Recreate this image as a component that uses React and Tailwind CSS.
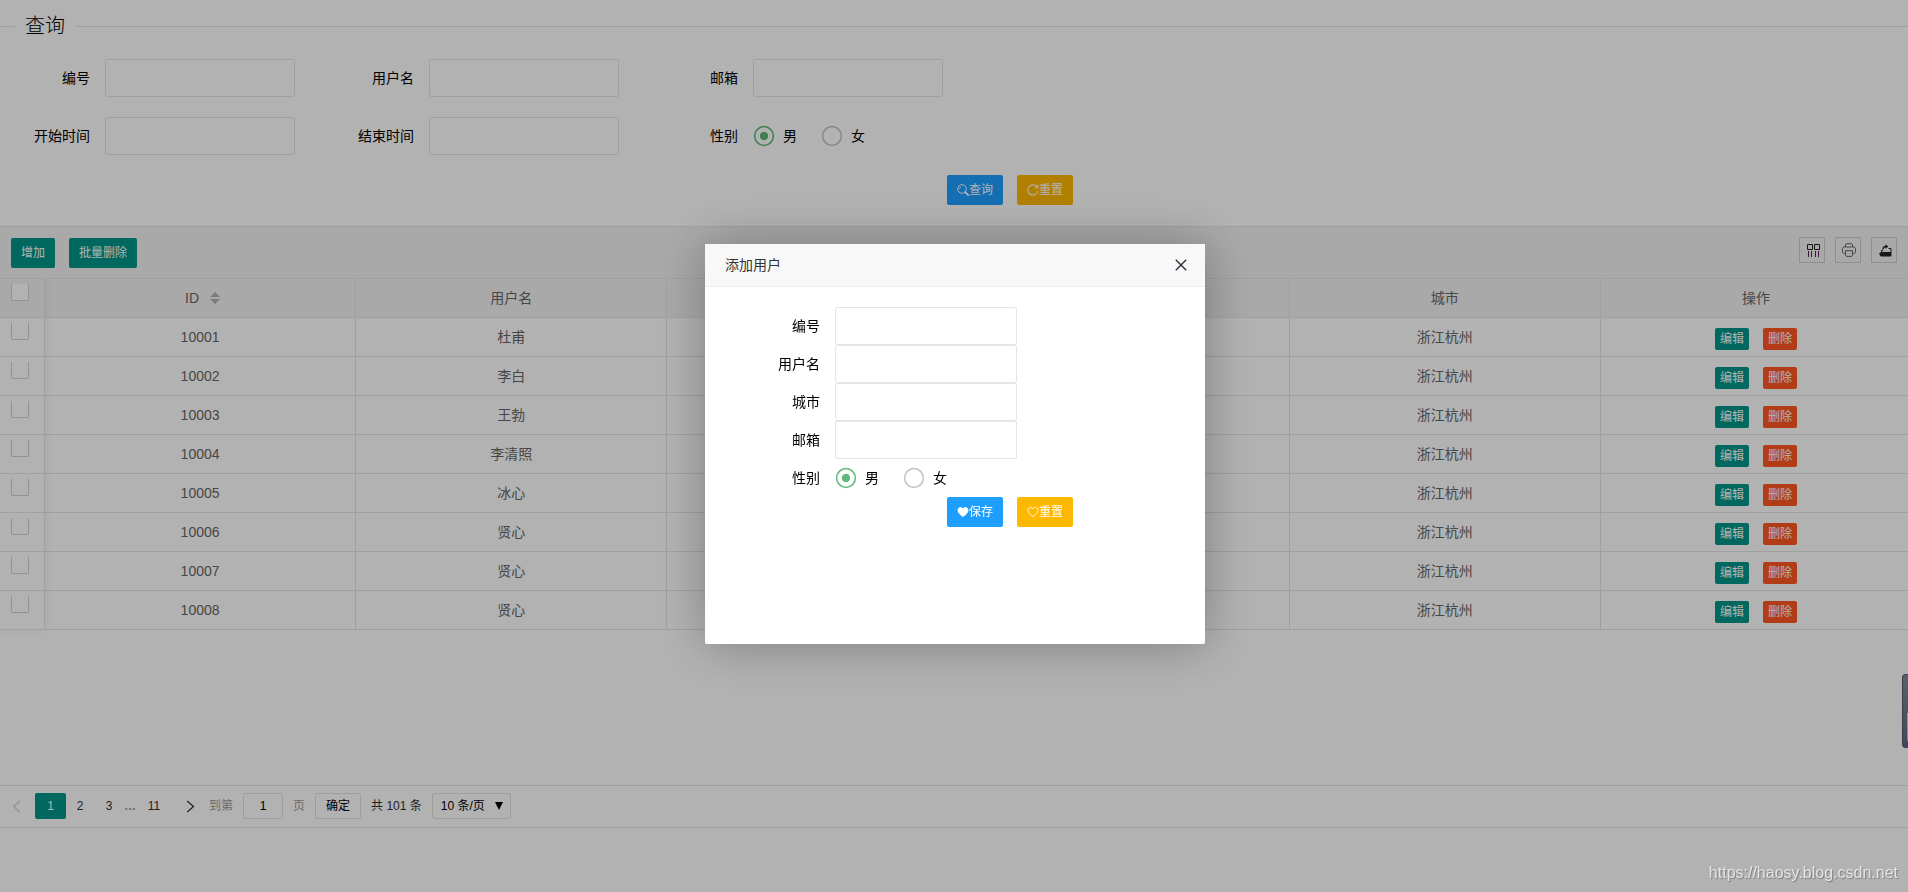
import { useState } from "react";

const USERS = [
  { id: 10001, username: "杜甫", city: "浙江杭州" },
  { id: 10002, username: "李白", city: "浙江杭州" },
  { id: 10003, username: "王勃", city: "浙江杭州" },
  { id: 10004, username: "李清照", city: "浙江杭州" },
  { id: 10005, username: "冰心", city: "浙江杭州" },
  { id: 10006, username: "贤心", city: "浙江杭州" },
  { id: 10007, username: "贤心", city: "浙江杭州" },
  { id: 10008, username: "贤心", city: "浙江杭州" },
];

const BTN = {
  primary: "bg-[#009688]",
  normal: "bg-[#1e9fff]",
  warm: "bg-[#ffb800]",
  danger: "bg-[#ff5722]",
};

function Button({ tone = "primary", size = "sm", icon, type = "button", children }) {
  const box = size === "xs" ? "h-[22px] px-[5px]" : "h-[30px] px-[10px]";
  return (
    <button
      type={type}
      className={`inline-flex items-center justify-center rounded-xs text-xs whitespace-nowrap text-white ${box} ${BTN[tone]}`}
    >
      {icon}
      {children}
    </button>
  );
}

function SearchIcon() {
  return (
    <svg width="12" height="12" viewBox="0 0 12 12" fill="none" stroke="currentColor" aria-hidden="true">
      <circle cx="5" cy="5" r="4.3" strokeWidth="1" />
      <path d="M2.6 5.2A2.6 2.6 0 0 1 4 2.9" strokeWidth="0.7" />
      <path d="M8.2 8.2l3 3" strokeWidth="1.8" strokeLinecap="round" />
    </svg>
  );
}

function RefreshIcon() {
  return (
    <svg width="12" height="12" viewBox="0 0 12 12" fill="none" stroke="currentColor" aria-hidden="true">
      <path d="M10.9 7A5.1 5.1 0 1 1 9.9 2.7" strokeWidth="1.1" />
      <path d="M10.8 0.8v3H7.8" strokeWidth="1.1" />
    </svg>
  );
}

function HeartIcon({ filled }) {
  return (
    <svg
      width="12"
      height="12"
      viewBox="0 0 12 12"
      fill={filled ? "currentColor" : "none"}
      stroke="currentColor"
      strokeWidth="0.9"
      aria-hidden="true"
    >
      <path d="M6 10.6C3.6 9 1 6.8 1 4.2 1 2.6 2.1 1.5 3.5 1.5c1.1 0 2 .6 2.5 1.5.5-.9 1.4-1.5 2.5-1.5C9.9 1.5 11 2.6 11 4.2c0 2.6-2.6 4.8-5 6.4z" />
    </svg>
  );
}

function ColumnsIcon() {
  return (
    <svg width="14" height="14" viewBox="0 0 14 14" fill="none" stroke="#222" aria-hidden="true">
      <path d="M1.5 1.5h5v5h-5zM8.5 1.5h5v5h-5z" />
      <path d="M2.5 8v6M5.5 8v6M9.5 8v6M12.5 8v6" stroke="#5c1f60" />
    </svg>
  );
}

function PrintIcon() {
  return (
    <svg width="14" height="14" viewBox="0 0 14 14" fill="none" stroke="#666" aria-hidden="true">
      <path d="M3.5 4V1.8c0-.7.4-1.1 1-1.1h5c.6 0 1 .4 1 1.1V4" />
      <path d="M3.2 10.5H2.3c-1 0-1.8-.7-1.8-1.7V5.8C.5 4.7 1.3 4 2.3 4h9.400c1 0 1.800.7 1.800 1.800v3c0 1-.8 1.700-1.800 1.700h-.9" />
      <path d="M3.500 7.700h7v4.400c0 .8-.4 1.300-1.100 1.300H4.600c-.7 0-1.100-.5-1.100-1.300z" />
    </svg>
  );
}

function ExportIcon() {
  return (
    <svg width="14" height="14" viewBox="0 0 14 14" fill="none" aria-hidden="true">
      <path d="M1 10h1.500V9h11v3.500c0 .6-.4 1-1 1H3.200c-.6 0-1-.3-1.200-.9z" fill="#222" />
      <path d="M3.500 9V7.500H5M10.500 5.500h2.500V9" stroke="#2a2340" />
      <path d="M5 6.500c0-2 1-3 3-3" stroke="#222" strokeWidth="1.300" />
      <path d="M7.500 1.200l2.800 2.300-2.800 2.300z" fill="#222" />
    </svg>
  );
}

function Chevron({ left }) {
  return (
    <svg width="9" height="13" viewBox="0 0 9 13" fill="none" stroke="currentColor" strokeWidth="1.3" aria-hidden="true">
      <path d={left ? "M7.800 1L1.500 6.500l6.300 5.500" : "M1.200 1l6.300 5.500L1.200 12"} />
    </svg>
  );
}

function TextField({ id, label, labelCls, inputCls }) {
  return (
    <div className="flex items-center gap-[15px]">
      <label htmlFor={id} className={`text-right ${labelCls}`}>
        {label}
      </label>
      <input
        id={id}
        type="text"
        className={`h-[38px] rounded-xs border border-[#e6e6e6] bg-white px-2.5 outline-none ${inputCls}`}
      />
    </div>
  );
}

function Radio({ name, label, checked, onChange }) {
  return (
    <label className="relative flex cursor-pointer items-center gap-2">
      <input
        type="radio"
        name={name}
        checked={checked}
        onChange={onChange}
        className="absolute size-[22px] cursor-pointer opacity-0"
      />
      <svg width="22" height="22" viewBox="0 0 22 22" fill="none" aria-hidden="true">
        <circle cx="11" cy="11" r="9.400" stroke={checked ? "#5fb878" : "#c2c2c2"} strokeWidth="1.500" />
        {checked && <circle cx="11" cy="11" r="4.200" fill="#5fb878" />}
      </svg>
      {label}
    </label>
  );
}

function SexField({ name, labelCls }) {
  const [sex, setSex] = useState("男");
  return (
    <div role="radiogroup" aria-label="性别" className="flex h-[38px] items-center gap-[15px]">
      <span className={`text-right ${labelCls}`}>性别</span>
      <div className="flex items-center gap-6">
        {["男", "女"].map((s) => (
          <Radio key={s} name={name} label={s} checked={sex === s} onChange={() => setSex(s)} />
        ))}
      </div>
    </div>
  );
}

function SearchForm() {
  const field = { labelCls: "w-[90px]", inputCls: "w-[190px]" };
  return (
    <form className="pt-3 pb-[21px]">
      <div className="flex items-center">
        <span className="h-px w-[15px] bg-[#e6e6e6]" />
        <h1 className="px-2.5 text-xl font-light">查询</h1>
        <span className="h-px flex-1 bg-[#e6e6e6]" />
      </div>
      <div className="mt-[19px] flex flex-col gap-5">
        <div className="flex flex-wrap gap-[29px]">
          <TextField id="q-id" label="编号" {...field} />
          <TextField id="q-name" label="用户名" {...field} />
          <TextField id="q-mail" label="邮箱" {...field} />
        </div>
        <div className="flex flex-wrap gap-[29px]">
          <TextField id="q-start" label="开始时间" {...field} />
          <TextField id="q-end" label="结束时间" {...field} />
          <SexField name="q-sex" labelCls="w-[90px]" />
        </div>
        <div className="ml-28 flex justify-center gap-[14px]">
          <Button tone="normal" icon={<SearchIcon />}>
            查询
          </Button>
          <Button tone="warm" icon={<RefreshIcon />}>
            重置
          </Button>
        </div>
      </div>
    </form>
  );
}

function Toolbar() {
  const tools = [
    { title: "筛选列", icon: <ColumnsIcon /> },
    { title: "打印", icon: <PrintIcon /> },
    { title: "导出", icon: <ExportIcon /> },
  ];
  return (
    <div className="flex items-start justify-between border-y border-[#e6e6e6] bg-[#f2f2f2] px-[11px] py-[10px]">
      <div className="flex gap-[14px] pt-px">
        <Button>增加</Button>
        <Button>批量删除</Button>
      </div>
      <div className="flex gap-2.5">
        {tools.map((t) => (
          <button
            key={t.title}
            type="button"
            aria-label={t.title}
            className="flex size-[26px] items-center justify-center border border-[#ccc] pl-0.5"
          >
            {t.icon}
          </button>
        ))}
      </div>
    </div>
  );
}

function RowCheckbox({ label }) {
  return (
    <input
      type="checkbox"
      aria-label={label}
      className="block h-[17px] w-[18px] appearance-none rounded-b-xs border border-t-0 border-[#d2d2d2] bg-white checked:bg-[#5fb878]"
    />
  );
}

function UserTable() {
  const cell = "h-[39px] border-r border-b border-[#e6e6e6] p-0 text-center font-normal";
  const checkCell = "border-r border-b border-[#e6e6e6] pt-[5px] pl-[11px] align-top";
  return (
    <div className="min-h-[506px] overflow-hidden">
      <div className="relative">
        <table className="w-[calc(100%+4px)] table-fixed border-separate border-spacing-0 text-[#666]">
          <colgroup>
            <col className="w-[45px]" />
            <col span={6} />
          </colgroup>
          <thead className="bg-[#f2f2f2]">
            <tr>
              <th className={checkCell}>
                <RowCheckbox label="全选" />
              </th>
              <th className={cell}>
                <span className="inline-flex items-center gap-[11px]">
                  ID
                  <svg width="10" height="12" viewBox="0 0 10 12" fill="#b2b2b2" className="-mr-[5px]" aria-hidden="true">
                    <path d="M5 0l5 5H0zM0 7h10l-5 5z" />
                  </svg>
                </span>
              </th>
              <th className={cell}>用户名</th>
              <th className={cell} />
              <th className={cell} />
              <th className={cell}>城市</th>
              <th className={cell}>操作</th>
            </tr>
          </thead>
          <tbody>
            {USERS.map((u) => (
              <tr key={u.id}>
                <td className={checkCell}>
                  <RowCheckbox label={`选择 ${u.id}`} />
                </td>
                <td className={cell}>{u.id}</td>
                <td className={cell}>{u.username}</td>
                <td className={cell} />
                <td className={cell} />
                <td className={cell}>{u.city}</td>
                <td className={cell}>
                  <div className="flex justify-center gap-[14px] pt-1">
                    <Button size="xs">编辑</Button>
                    <Button size="xs" tone="danger">
                      删除
                    </Button>
                  </div>
                </td>
              </tr>
            ))}
          </tbody>
        </table>
        <div className="pointer-events-none absolute inset-y-0 left-0 w-[45px] shadow-[0_-1px_8px_rgba(0,0,0,0.08)]" />
      </div>
    </div>
  );
}

function Pagination() {
  const box = "h-[26px] rounded-xs border border-[#e2e2e2] bg-white text-black";
  return (
    <nav className="flex items-center border-y border-[#e6e6e6] pt-[7px] pb-2 text-xs text-[#333]">
      <button type="button" aria-label="上一页" className="flex w-[35px] pl-3 text-[#d2d2d2]">
        <Chevron left />
      </button>
      <a href="#1" className="flex h-[26px] w-[31px] items-center justify-center rounded-xs bg-[#009688] text-white">
        1
      </a>
      <a href="#2" className="w-7 text-center">2</a>
      <a href="#3" className="w-[30px] text-center">3</a>
      <span className="w-3 text-center font-bold text-[#999]">…</span>
      <a href="#11" className="w-9 text-center">11</a>
      <button type="button" aria-label="下一页" className="flex w-[37px] justify-center">
        <Chevron />
      </button>
      <label className="flex items-center gap-[10px] text-[#999]">
        到第
        <input type="text" defaultValue="1" className={`w-10 text-center ${box}`} />
        页
      </label>
      <button type="button" className={`ml-2.5 px-[10px] ${box}`}>
        确定
      </button>
      <span className="mx-[10px]">共 101 条</span>
      <div className="relative">
        <select aria-label="每页条数" defaultValue="10" className={`w-[79px] appearance-none pl-2 ${box}`}>
          <option value="10">10 条/页</option>
        </select>
        <svg
          width="8"
          height="8"
          viewBox="0 0 8 8"
          className="pointer-events-none absolute top-[9px] right-[8px]"
          aria-hidden="true"
        >
          <path d="M0 0h8L4 8z" />
        </svg>
      </div>
    </nav>
  );
}

function AddUserDialog() {
  const field = { labelCls: "w-[115px]", inputCls: "w-[182px]" };
  return (
    <div className="fixed inset-0 flex items-start justify-center bg-black/30 pt-[244px] pl-0.5">
      <div
        role="dialog"
        aria-label="添加用户"
        className="min-h-[400px] w-[500px] rounded-xs bg-white shadow-[1px_1px_50px_rgba(0,0,0,0.3)]"
      >
        <div className="flex h-[43px] items-center justify-between border-b border-[#eee] bg-[#f8f8f8] pr-[18px] pl-5 text-[#333]">
          <h2>添加用户</h2>
          <button type="button" aria-label="关闭">
            <svg width="12" height="12" viewBox="0 0 12 12" fill="none" stroke="#2e2d3c" strokeWidth="1.400" aria-hidden="true">
              <path d="M0.800 0.800l10.400 10.400M11.200 0.800L0.800 11.200" />
            </svg>
          </button>
        </div>
        <form className="pt-5">
          <TextField id="a-id" label="编号" {...field} />
          <TextField id="a-name" label="用户名" {...field} />
          <TextField id="a-city" label="城市" {...field} />
          <TextField id="a-mail" label="邮箱" {...field} />
          <SexField name="a-sex" labelCls="w-[115px]" />
          <div className="ml-[110px] flex justify-center gap-[14px]">
            <Button tone="normal" icon={<HeartIcon filled />}>
              保存
            </Button>
            <Button tone="warm" icon={<HeartIcon />}>
              重置
            </Button>
          </div>
        </form>
      </div>
    </div>
  );
}

export default function App() {
  return (
    <div className="min-h-screen bg-white font-['Liberation_Sans','Noto_Sans_CJK_SC',sans-serif] text-sm text-black">
      <SearchForm />
      <Toolbar />
      <UserTable />
      <Pagination />
      <AddUserDialog />
      <div className="fixed top-[674px] right-0 h-[74px] w-1.5 rounded-l-sm border border-r-0 border-[#3a3d49] bg-linear-to-b from-[#5a6072] to-[#42465a]">
        <div className="mt-[38px] ml-auto h-7 w-px bg-linear-to-b from-[#9ba55c] to-[#4f9a94]" />
      </div>
      <div className="fixed right-2.5 bottom-[7px] text-base text-white/70 [text-shadow:1px_1px_1px_rgba(0,0,0,0.3)]">
        https://haosy.blog.csdn.net
      </div>
    </div>
  );
}
